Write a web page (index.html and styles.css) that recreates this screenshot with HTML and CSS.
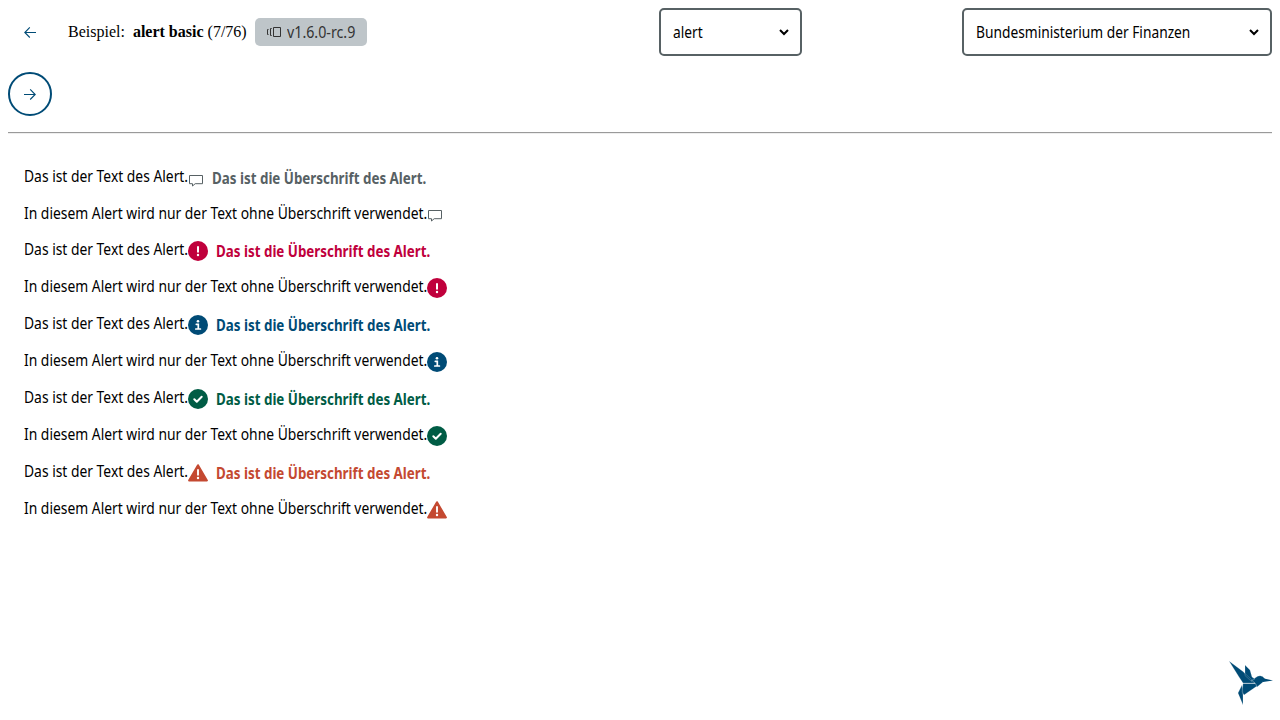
FILE: index.html
```html
<!DOCTYPE html>
<html lang="de">
<head>
<meta charset="utf-8">
<title>alert basic</title>
<link rel="stylesheet" href="styles.css">
</head>
<body>
<svg width="0" height="0" class="sprite">
  <symbol id="comment" viewBox="0 0 16 16"><path d="M1.5 3.5h13v8.2H7.2L4.500 14v-2.3h-3z" fill="none" stroke="#576164" stroke-width="1"/></symbol>
  <symbol id="error" viewBox="0 0 20 20"><circle cx="10" cy="10" r="10" fill="#c0003c"/><path d="M10 6v4.7" stroke="#fff" stroke-width="2" stroke-linecap="round"/><circle cx="10" cy="14" r="1.2" fill="#fff"/></symbol>
  <symbol id="info" viewBox="0 0 20 20"><circle cx="10" cy="10" r="10" fill="#004b76"/><circle cx="10" cy="6.3" r="1.3" fill="#fff"/><path d="M8.3 9.3h2v4.6M7.8 14h4.6" fill="none" stroke="#fff" stroke-width="1.7" stroke-linecap="round"/></symbol>
  <symbol id="success" viewBox="0 0 20 20"><circle cx="10" cy="10" r="10" fill="#005c45"/><path d="M6.3 10.2l2.5 2.5 4.9-4.9" fill="none" stroke="#fff" stroke-width="2" stroke-linecap="round" stroke-linejoin="round"/></symbol>
  <symbol id="warning" viewBox="0 0 20 20"><path d="M10 2.2 18.9 17.5H1.1z" fill="#c44931" stroke="#c44931" stroke-width="2" stroke-linejoin="round"/><path d="M10 7v4.7" stroke="#fff" stroke-width="1.9" stroke-linecap="round"/><circle cx="10" cy="15" r="1.2" fill="#fff"/></symbol>
</svg>
<header class="toolbar">
  <div class="example">
    <button class="nav plain" aria-label="zurück"><svg width="12" height="12" viewBox="0 0 12 12"><path d="M12 6.5H.8M5.8 1.3.8 6.5l5 5"/></svg></button>
    <span class="title">Beispiel:&nbsp; <b>alert basic</b> (7/76)</span>
    <span class="badge"><svg width="16" height="12" viewBox="0 0 16 12"><path d="M7.5 1.5h7v9h-7zM5.7 2.5H4.5v7h1.2M2.5 3.5h-1v5h1"/></svg><span class="version">v1.6.0-rc.9</span></span>
    <button class="nav" aria-label="weiter"><svg width="12" height="12" viewBox="0 0 12 12"><path d="M0 6.5h11.2M6.2 1.3l5 5.2-5 5"/></svg></button>
  </div>
  <div class="select component"><span class="choice">alert</span><svg width="10" height="7" viewBox="0 0 10 7"><path d="m1 1 4 4 4-4"/></svg></div>
  <div class="select theme"><span class="choice">Bundesministerium der Finanzen</span><svg width="10" height="7" viewBox="0 0 10 7"><path d="m1 1 4 4 4-4"/></svg></div>
</header>
<hr>
<main>
  <div class="alert default"><span class="short">Das ist der Text des Alert.</span><svg class="small"><use href="#comment"/></svg><b>Das ist die Überschrift des Alert.</b></div>
  <div class="alert text-only default"><span class="long">In diesem Alert wird nur der Text ohne Überschrift verwendet.</span><svg class="small"><use href="#comment"/></svg></div>
  <div class="alert error"><span class="short">Das ist der Text des Alert.</span><svg><use href="#error"/></svg><b>Das ist die Überschrift des Alert.</b></div>
  <div class="alert text-only"><span class="long">In diesem Alert wird nur der Text ohne Überschrift verwendet.</span><svg><use href="#error"/></svg></div>
  <div class="alert info"><span class="short">Das ist der Text des Alert.</span><svg><use href="#info"/></svg><b>Das ist die Überschrift des Alert.</b></div>
  <div class="alert text-only"><span class="long">In diesem Alert wird nur der Text ohne Überschrift verwendet.</span><svg><use href="#info"/></svg></div>
  <div class="alert success"><span class="short">Das ist der Text des Alert.</span><svg><use href="#success"/></svg><b>Das ist die Überschrift des Alert.</b></div>
  <div class="alert text-only"><span class="long">In diesem Alert wird nur der Text ohne Überschrift verwendet.</span><svg><use href="#success"/></svg></div>
  <div class="alert warning"><span class="short">Das ist der Text des Alert.</span><svg><use href="#warning"/></svg><b>Das ist die Überschrift des Alert.</b></div>
  <div class="alert text-only"><span class="long">In diesem Alert wird nur der Text ohne Überschrift verwendet.</span><svg><use href="#warning"/></svg></div>
</main>
<svg class="bird" width="44" height="44" viewBox="0 0 44 44"><path fill="#004b76" stroke="#fff" stroke-width=".2" d="M0 0 14 10.5 26 22H14L10 16zM16 4 21 9 23 16 26 18 22 20 16 14.5zM22 20 26 17Q32 12 36 18L34 21 28 26 26 22zM14 22.5H26.5L28 25 15 34 13 31zM13 24 14 34V44L9 32z"/><path fill="#004b76" d="m34 17.300 10 2.200-10 1.500z"/></svg>
</body>
</html>
```
FILE: styles.css
```css
body { margin: 8px; height: 704px; overflow: hidden; font: 16px/20px "Liberation Serif", serif; color: #000; background: #fff; }
.sprite { position: absolute; }
.toolbar { display: flex; align-items: flex-start; height: 124px; }
.example { width: 651px; display: flex; flex-wrap: wrap; align-items: center; row-gap: 16px; height: 108px; }
.nav { display: flex; align-items: center; justify-content: center; box-sizing: border-box; width: 44px; height: 44px; padding: 0; border: 2px solid #004b76; border-radius: 50%; background: none; }
.nav.plain { border-color: transparent; height: 48px; }
.nav svg { fill: none; stroke: #004b76; stroke-width: 1.1; }
.title { width: 179px; margin: 0 8px 0 16px; white-space: nowrap; }
.badge { display: flex; align-items: center; box-sizing: border-box; width: 112px; height: 28px; padding-left: 11px; gap: 5px; border-radius: 5px; background: #bec5c9; color: #333; margin-right: 280px; }
.badge svg { flex: none; fill: none; stroke: #333; stroke-width: 1; }
.version, .select, .alert { font-family: "Noto Sans", sans-serif; white-space: nowrap; }
.version { transform: scaleX(.89); transform-origin: left; }
.select { display: flex; align-items: center; justify-content: space-between; box-sizing: border-box; height: 48px; padding: 0 11px 0 12px; border: 2px solid #576164; border-radius: 5px; }
.choice { transform: scaleX(.86); transform-origin: left; }
.select svg { fill: none; stroke: #000; stroke-width: 2; }
.component { width: 143px; }
.theme { width: 310px; margin-left: 160px; }
hr { margin: 0; border: 0; border-top: 1px solid #9a9a9a; border-bottom: 1px solid #eee; height: 0; }
main { padding: 23px 16px 0; }
.alert { display: flex; align-items: center; height: 38px; }
.alert.text-only { height: 36px; }
.alert.text-only.default { height: 35px; }
.short, .long { flex: none; transform: scaleX(.866); transform-origin: left; }
.short { width: 164px; margin-bottom: 1px; }
.long { width: 403px; }
.alert svg { width: 20px; height: 20px; margin-top: 3px; }
.alert svg.small { width: 16px; height: 16px; margin-top: 7px; }
.text-only svg.small { margin-top: 4px; }
.alert b { margin: 3px 0 0 8px; transform: scaleX(.835); transform-origin: left; }
.default b { color: #576164; }
.error b { color: #c0003c; }
.info b { color: #004b76; }
.success b { color: #005c45; }
.warning b { color: #c44931; }
.bird { position: fixed; left: 1229px; top: 661px; }
```
